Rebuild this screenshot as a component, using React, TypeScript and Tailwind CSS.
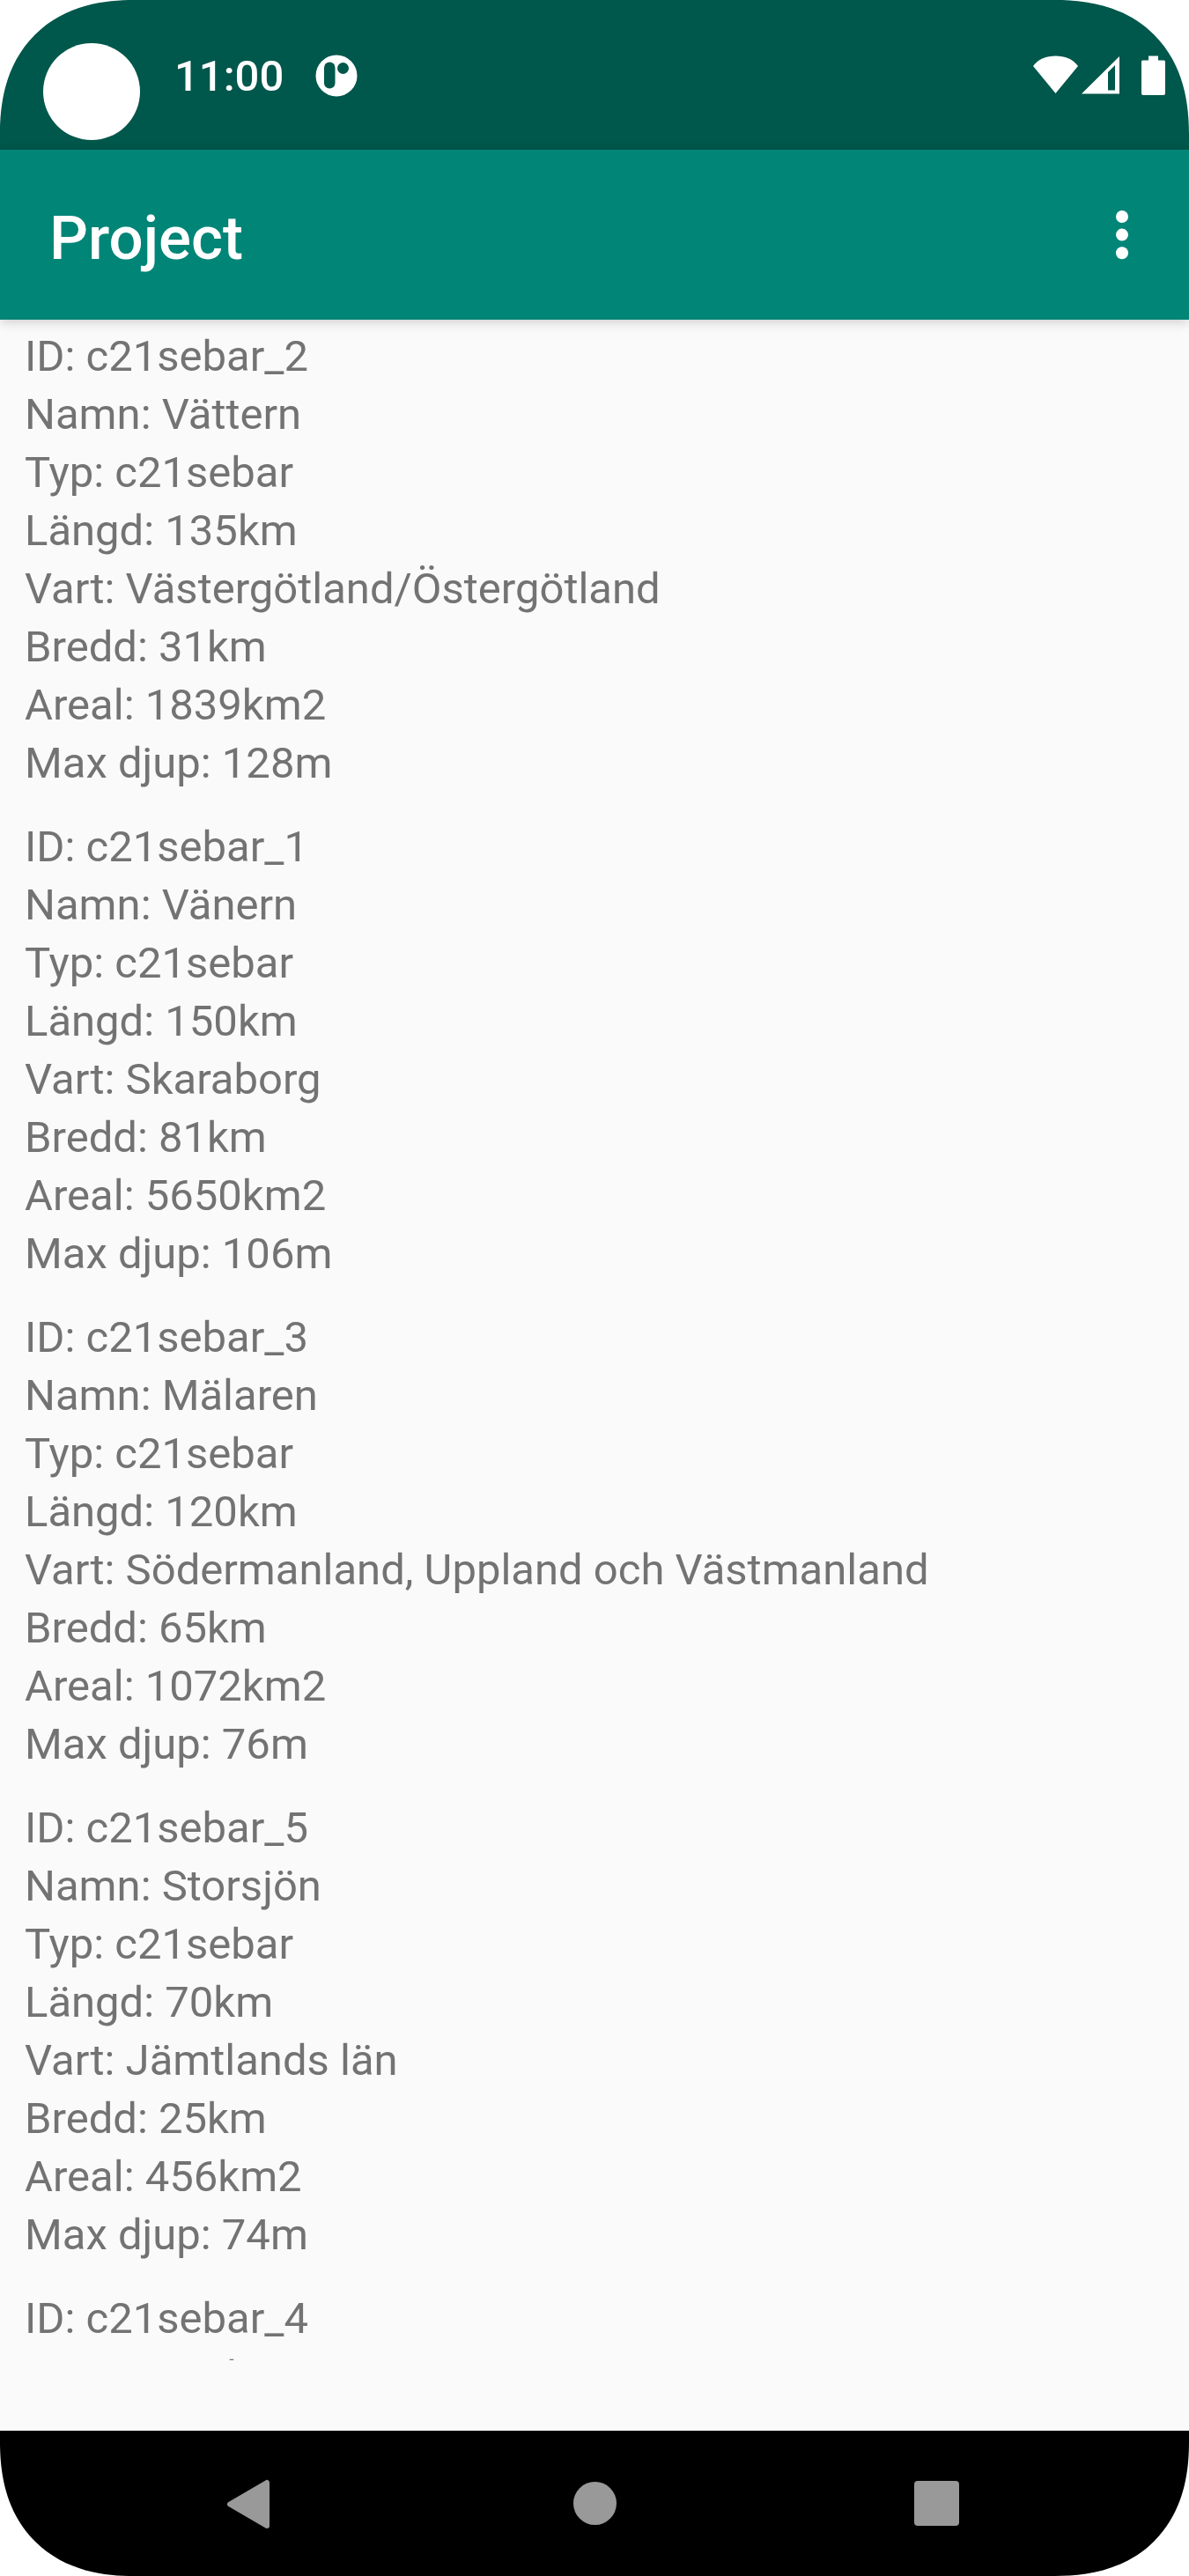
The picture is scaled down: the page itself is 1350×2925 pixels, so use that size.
type Lake = {
  id: string;
  name: string;
  type: string;
  length: string;
  location: string;
  width: string;
  area: string;
  depth: string;
};

const lakes: Lake[] = [
  { id: "c21sebar_2", name: "Vättern", type: "c21sebar", length: "135km", location: "Västergötland/Östergötland", width: "31km", area: "1839km2", depth: "128m" },
  { id: "c21sebar_1", name: "Vänern", type: "c21sebar", length: "150km", location: "Skaraborg", width: "81km", area: "5650km2", depth: "106m" },
  { id: "c21sebar_3", name: "Mälaren", type: "c21sebar", length: "120km", location: "Södermanland, Uppland och Västmanland", width: "65km", area: "1072km2", depth: "76m" },
  { id: "c21sebar_5", name: "Storsjön", type: "c21sebar", length: "70km", location: "Jämtlands län", width: "25km", area: "456km2", depth: "74m" },
];

function StatusBar() {
  return (
    <div className="relative flex h-[170px] shrink-0 items-center bg-[#00574b] pt-[2px] pr-[27px] pl-[198px] text-white">
      <span className="absolute top-[49px] left-[49px] size-[110px] rounded-full bg-white" />
      <span className="pt-[2px] text-[49px] leading-[56px] font-medium">11:00</span>
      <svg className="ml-[36px] size-[48px]" viewBox="0 0 48 48" aria-hidden="true">
        <circle cx="24" cy="24" r="23.5" fill="#fff" />
        <rect x="10" y="8.500" width="12.500" height="30" rx="6.250" fill="#00574b" />
        <circle cx="31.500" cy="15.500" r="6.500" fill="#00574b" />
      </svg>
      <div className="ml-auto flex items-center">
        <svg className="h-[46px] w-[51px]" viewBox="0 0 51 46" aria-hidden="true">
          <path d="M0 12C6 4 15 0.500 25.500 0.500S45 4 51 12L25.500 43Z" fill="#fff" />
        </svg>
        <svg className="ml-[4px] h-[46px] w-[43px]" viewBox="0 0 43 46" aria-hidden="true">
          <path fillRule="evenodd" d="M43 1V43.500H0ZM30 19V39.500H38V11Z" fill="#fff" />
        </svg>
        <svg className="ml-[25px] h-[46px] w-[27px]" viewBox="0 0 27 46" aria-hidden="true">
          <path d="M8 0.500H19V5.500H25.500Q27 5.500 27 7V43Q27 45 25 45H2Q0 45 0 43V7Q0 5.500 1.500 5.500H8Z" fill="#fff" />
        </svg>
      </div>
    </div>
  );
}

function AppBar() {
  return (
    <header className="z-10 flex h-[193px] shrink-0 items-center justify-between bg-[#008577] pr-[48px] pl-[56px] text-white shadow-[0_3px_12px_rgba(0,0,0,0.18)]">
      <h1 className="pt-[8px] text-[69px] leading-[82px] font-medium">Project</h1>
      <button type="button" aria-label="More options" className="flex h-[84px] w-[56px] items-center justify-center">
        <svg className="h-[56px] w-[14px]" viewBox="0 0 14 56" fill="#fff" aria-hidden="true">
          <circle cx="7" cy="7" r="7" />
          <circle cx="7" cy="27.600" r="7" />
          <circle cx="7" cy="48.200" r="7" />
        </svg>
      </button>
    </header>
  );
}

function LakeItem({ lake }: { lake: Lake }) {
  return (
    <li className="pb-[29px]">
      <p>ID: {lake.id}</p>
      <p>Namn: {lake.name}</p>
      <p>Typ: {lake.type}</p>
      <p>Längd: {lake.length}</p>
      <p>Vart: {lake.location}</p>
      <p>Bredd: {lake.width}</p>
      <p>Areal: {lake.area}</p>
      <p>Max djup: {lake.depth}</p>
    </li>
  );
}

function NavigationBar() {
  return (
    <nav className="grid h-[165px] shrink-0 grid-cols-3 bg-black px-[93px]">
      <button type="button" aria-label="Back" className="flex items-center justify-center">
        <svg className="size-[60px]" viewBox="0 0 60 60" aria-hidden="true">
          <path d="M46 6V55L4 30.500Z" fill="#999" stroke="#999" strokeWidth="6" strokeLinejoin="round" />
        </svg>
      </button>
      <button type="button" aria-label="Home" className="flex items-center justify-center">
        <span className="size-[49px] rounded-full bg-[#999]" />
      </button>
      <button type="button" aria-label="Recent apps" className="flex items-center justify-center">
        <span className="size-[51px] rounded-[4px] bg-[#999]" />
      </button>
    </nav>
  );
}

export default function App() {
  return (
    <div className="h-screen bg-white font-['Roboto',sans-serif]">
      <div className="flex h-full flex-col overflow-hidden rounded-[152px] bg-[#fafafa] [corner-shape:superellipse(1.2)]">
        <StatusBar />
        <AppBar />
        <main className="mb-[80px] min-h-0 flex-1 overflow-hidden px-[28px] pt-[9px] text-[49px] leading-[66px] text-[#737373]">
          <ul>
            {lakes.map((lake) => (
              <LakeItem key={lake.id} lake={lake} />
            ))}
            <li>
              <p>ID: c21sebar_4</p>
              <p>Namn: Hjälmaren</p>
            </li>
          </ul>
        </main>
        <NavigationBar />
      </div>
    </div>
  );
}
